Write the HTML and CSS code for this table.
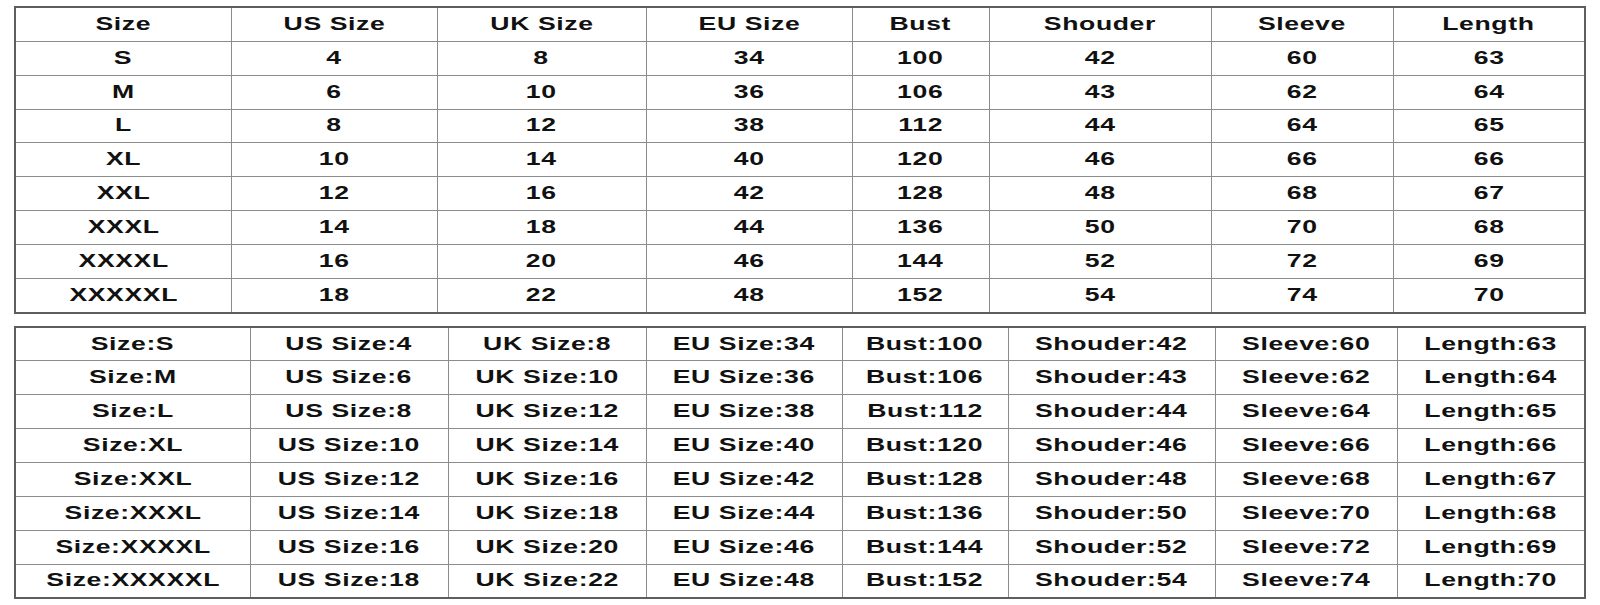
FILE: index.html
```html
<!DOCTYPE html>
<html>
<head>
<meta charset="utf-8">
<link rel="stylesheet" href="styles.css">
</head>
<body>
<div class="page">
<table class="chart chart-top">
<colgroup><col class="c1"><col class="c2"><col class="c3"><col class="c4"><col class="c5"><col class="c6"><col class="c7"><col class="c8"></colgroup>
<tr><td><span>Size</span></td><td><span>US Size</span></td><td><span>UK Size</span></td><td><span>EU Size</span></td><td><span>Bust</span></td><td><span>Shouder</span></td><td><span>Sleeve</span></td><td><span>Length</span></td></tr>
<tr><td><span>S</span></td><td><span>4</span></td><td><span>8</span></td><td><span>34</span></td><td><span>100</span></td><td><span>42</span></td><td><span>60</span></td><td><span>63</span></td></tr>
<tr><td><span>M</span></td><td><span>6</span></td><td><span>10</span></td><td><span>36</span></td><td><span>106</span></td><td><span>43</span></td><td><span>62</span></td><td><span>64</span></td></tr>
<tr><td><span>L</span></td><td><span>8</span></td><td><span>12</span></td><td><span>38</span></td><td><span>112</span></td><td><span>44</span></td><td><span>64</span></td><td><span>65</span></td></tr>
<tr><td><span>XL</span></td><td><span>10</span></td><td><span>14</span></td><td><span>40</span></td><td><span>120</span></td><td><span>46</span></td><td><span>66</span></td><td><span>66</span></td></tr>
<tr><td><span>XXL</span></td><td><span>12</span></td><td><span>16</span></td><td><span>42</span></td><td><span>128</span></td><td><span>48</span></td><td><span>68</span></td><td><span>67</span></td></tr>
<tr><td><span>XXXL</span></td><td><span>14</span></td><td><span>18</span></td><td><span>44</span></td><td><span>136</span></td><td><span>50</span></td><td><span>70</span></td><td><span>68</span></td></tr>
<tr><td><span>XXXXL</span></td><td><span>16</span></td><td><span>20</span></td><td><span>46</span></td><td><span>144</span></td><td><span>52</span></td><td><span>72</span></td><td><span>69</span></td></tr>
<tr><td><span>XXXXXL</span></td><td><span>18</span></td><td><span>22</span></td><td><span>48</span></td><td><span>152</span></td><td><span>54</span></td><td><span>74</span></td><td><span>70</span></td></tr>
</table>
<table class="chart chart-bottom">
<colgroup><col class="d1"><col class="d2"><col class="d3"><col class="d4"><col class="d5"><col class="d6"><col class="d7"><col class="d8"></colgroup>
<tr><td><span>Size:S</span></td><td><span>US Size:4</span></td><td><span>UK Size:8</span></td><td><span>EU Size:34</span></td><td><span>Bust:100</span></td><td><span>Shouder:42</span></td><td><span>Sleeve:60</span></td><td><span>Length:63</span></td></tr>
<tr><td><span>Size:M</span></td><td><span>US Size:6</span></td><td><span>UK Size:10</span></td><td><span>EU Size:36</span></td><td><span>Bust:106</span></td><td><span>Shouder:43</span></td><td><span>Sleeve:62</span></td><td><span>Length:64</span></td></tr>
<tr><td><span>Size:L</span></td><td><span>US Size:8</span></td><td><span>UK Size:12</span></td><td><span>EU Size:38</span></td><td><span>Bust:112</span></td><td><span>Shouder:44</span></td><td><span>Sleeve:64</span></td><td><span>Length:65</span></td></tr>
<tr><td><span>Size:XL</span></td><td><span>US Size:10</span></td><td><span>UK Size:14</span></td><td><span>EU Size:40</span></td><td><span>Bust:120</span></td><td><span>Shouder:46</span></td><td><span>Sleeve:66</span></td><td><span>Length:66</span></td></tr>
<tr><td><span>Size:XXL</span></td><td><span>US Size:12</span></td><td><span>UK Size:16</span></td><td><span>EU Size:42</span></td><td><span>Bust:128</span></td><td><span>Shouder:48</span></td><td><span>Sleeve:68</span></td><td><span>Length:67</span></td></tr>
<tr><td><span>Size:XXXL</span></td><td><span>US Size:14</span></td><td><span>UK Size:18</span></td><td><span>EU Size:44</span></td><td><span>Bust:136</span></td><td><span>Shouder:50</span></td><td><span>Sleeve:70</span></td><td><span>Length:68</span></td></tr>
<tr><td><span>Size:XXXXL</span></td><td><span>US Size:16</span></td><td><span>UK Size:20</span></td><td><span>EU Size:46</span></td><td><span>Bust:144</span></td><td><span>Shouder:52</span></td><td><span>Sleeve:72</span></td><td><span>Length:69</span></td></tr>
<tr><td><span>Size:XXXXXL</span></td><td><span>US Size:18</span></td><td><span>UK Size:22</span></td><td><span>EU Size:48</span></td><td><span>Bust:152</span></td><td><span>Shouder:54</span></td><td><span>Sleeve:74</span></td><td><span>Length:70</span></td></tr>
</table>
</div>
</body>
</html>
```
FILE: styles.css
```css
html, body {
  margin: 0;
  padding: 0;
  background: #ffffff;
}
.page {
  padding: 6px 14px 0 14px;
  display: flex;
  flex-direction: column;
  gap: 12px;
}
.chart {
  width: 1572px;
  table-layout: fixed;
  border-collapse: collapse;
  border: 2px solid #5e5e5e;
  font-family: "Liberation Sans", Arial, sans-serif;
  font-weight: bold;
  font-size: 17.5px;
  color: #111111;
}
.chart td {
  height: 32.85px;
  padding: 0;
  text-align: center;
  vertical-align: middle;
  border: 1.5px solid #8c8c8c;
  overflow: visible;
  white-space: nowrap;
}
.chart tr:first-child td { border-top: 2px solid #5e5e5e; }
.chart tr:last-child td { border-bottom: 2px solid #5e5e5e; }
.chart td:first-child { border-left: 2px solid #5e5e5e; }
.chart td:last-child { border-right: 2px solid #5e5e5e; }
.chart td span {
  display: inline-block;
  letter-spacing: 0.4px;
  transform: scaleX(1.52);
}
.c1 { width: 216px; }
.c2 { width: 206px; }
.c3 { width: 209px; }
.c4 { width: 206px; }
.c5 { width: 137px; }
.c6 { width: 222px; }
.c7 { width: 182px; }
.c8 { width: 192px; }
.d1 { width: 235px; }
.d2 { width: 198px; }
.d3 { width: 198px; }
.d4 { width: 196px; }
.d5 { width: 166px; }
.d6 { width: 207px; }
.d7 { width: 182px; }
.d8 { width: 188px; }
```
